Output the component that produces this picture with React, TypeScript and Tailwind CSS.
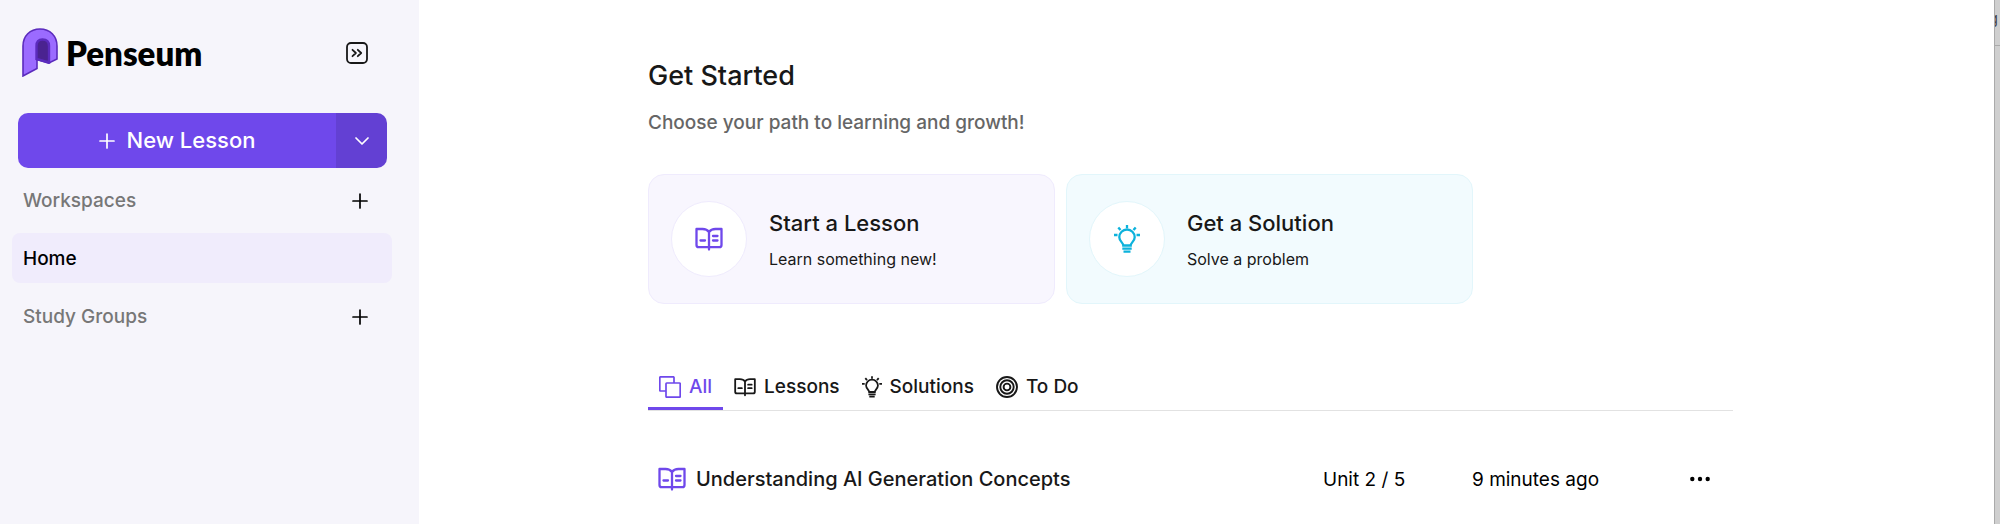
import { useState } from "react";
import type { ReactNode } from "react";

interface IconProps {
  className?: string;
}

interface StartCardProps {
  title: string;
  description: string;
  icon: ReactNode;
  cardClass: string;
  circleClass: string;
}

interface Lesson {
  id: string;
  title: string;
  unit: string;
  updated: string;
}

const lessons: Lesson[] = [
  {
    id: "ai-generation",
    title: "Understanding AI Generation Concepts",
    unit: "Unit 2 / 5",
    updated: "9 minutes ago",
  },
];

const LogoMark = ({ className }: IconProps) => (
  <svg
    viewBox="0 0 36 49"
    stroke="#5b2bbd"
    strokeWidth="1.6"
    className={className}
    aria-hidden="true"
  >
    <path
      d="M1 48V18C1 8 8 1 18 1s17 7 17 17v13l-8.500 4.200L15 31.500V40.500Z"
      fill="#9b6bff"
    />
    <path
      d="M14.500 31V18c0-4 2-6.500 6-6.500s6.500 2.500 6.500 6.500v16.500Z"
      fill="#4a2390"
      strokeWidth="2.400"
    />
  </svg>
);

const BookIcon = ({ className }: IconProps) => (
  <svg
    viewBox="0 0 28 24"
    fill="none"
    stroke="currentColor"
    strokeWidth="2.300"
    strokeLinecap="round"
    strokeLinejoin="round"
    className={className}
    aria-hidden="true"
  >
    <path d="M14 22.500V5c-1.500-2.200-4-3-6.500-3H1.500v16c0 1.500 1 2.200 2.200 2.200h20.600c1.200 0 2.200-.7 2.200-2.200V2h-6c-2.500 0-5 .8-6.500 3" />
    <path d="M5.500 13.500h4.500M18 9h4.500M18 13.500h4.500" />
  </svg>
);

const BulbIcon = ({ className }: IconProps) => (
  <svg
    viewBox="0 0 26 28"
    fill="none"
    stroke="currentColor"
    strokeWidth="2.300"
    className={className}
    aria-hidden="true"
  >
    <path d="M9.300 20.500c0-2.800-4-4.300-4-8.300a7.700 7.700 0 0 1 15.400 0c0 4-4 5.500-4 8.300Z" />
    <path d="M8.300 23.600h9.400M9.500 26.600h7M13 0v3.200M0 10h3.500M22.500 10H26M4.300 2.400l2.200 2.700M21.700 2.400l-2.200 2.700" />
  </svg>
);

const StackIcon = ({ className }: IconProps) => (
  <svg
    viewBox="0 0 22 22"
    fill="none"
    stroke="currentColor"
    strokeWidth="1.700"
    strokeLinejoin="round"
    className={className}
    aria-hidden="true"
  >
    <path d="M7 15H1.500a.7.7 0 0 1-.7-.7V1.500a.7.7 0 0 1 .7-.7h12.800a.7.700 0 0 1 .7.7V7" />
    <rect x="7" y="7" width="14.200" height="14.200" rx=".7" />
  </svg>
);

const TargetIcon = ({ className }: IconProps) => (
  <svg
    viewBox="0 0 22 22"
    fill="none"
    stroke="currentColor"
    strokeWidth="1.900"
    className={className}
    aria-hidden="true"
  >
    <circle cx="11" cy="11" r="10" />
    <circle cx="11" cy="11" r="6.700" />
    <circle cx="11" cy="11" r="3.400" />
  </svg>
);

const PlusIcon = ({ className }: IconProps) => (
  <svg
    viewBox="0 0 16 16"
    stroke="currentColor"
    strokeWidth="1.700"
    strokeLinecap="round"
    className={className}
    aria-hidden="true"
  >
    <path d="M8 1v14M1 8h14" />
  </svg>
);

const StartCard = ({
  title,
  description,
  icon,
  cardClass,
  circleClass,
}: StartCardProps) => (
  <button
    type="button"
    className={`flex flex-1 items-center gap-[22px] rounded-2xl border px-[22px] py-[26px] text-left ${cardClass}`}
  >
    <span
      className={`flex size-[76px] shrink-0 items-center justify-center rounded-full border bg-white ${circleClass}`}
    >
      {icon}
    </span>
    <span className="flex flex-col gap-2">
      <span className="text-[22px] leading-8 font-medium">{title}</span>
      <span className="text-[16px] leading-6">{description}</span>
    </span>
  </button>
);

const tabs = [
  { name: "All", icon: <StackIcon className="size-[22px]" /> },
  { name: "Lessons", icon: <BookIcon className="h-5 w-[22px]" /> },
  { name: "Solutions", icon: <BulbIcon className="h-[22px] w-5" /> },
  { name: "To Do", icon: <TargetIcon className="size-[22px]" /> },
];

const Sidebar = () => (
  <aside className="w-[419px] shrink-0 bg-[#f6f5fb] pt-7">
    <div className="flex items-center justify-between pr-[51px] pl-[22px]">
      <a href="#" className="flex items-center gap-2">
        <LogoMark className="h-[49px] w-9" />
        <span className="font-['Noto_Sans_SemiCondensed','Open_Sans_SemiCondensed','Lato',sans-serif] text-[33px] leading-[46px] font-extrabold text-black">
          Penseum
        </span>
      </a>
      <button type="button" aria-label="Toggle sidebar">
        <svg
          viewBox="0 0 22 22"
          fill="none"
          stroke="currentColor"
          strokeWidth="1.800"
          strokeLinecap="round"
          strokeLinejoin="round"
          className="size-[22px]"
        >
          <rect x="1" y="1" width="20" height="20" rx="4" />
          <path d="m6.500 7.800 3.400 3.200-3.400 3.200M11.800 7.800l3.400 3.200-3.400 3.200" />
        </svg>
      </button>
    </div>

    <div className="mt-9 mr-8 ml-[18px] flex h-[55px] overflow-hidden rounded-[10px] text-white">
      <button
        type="button"
        className="flex flex-1 items-center justify-center gap-3 bg-[#6f48eb] text-[22px] font-medium"
      >
        <PlusIcon className="size-4" />
        New Lesson
      </button>
      <button
        type="button"
        aria-label="More lesson options"
        className="flex w-[51px] items-center justify-center bg-[#6340d3]"
      >
        <svg
          viewBox="0 0 14 8"
          fill="none"
          stroke="currentColor"
          strokeWidth="1.700"
          strokeLinecap="round"
          strokeLinejoin="round"
          className="h-2 w-3.5"
        >
          <path d="m1 1 6 6 6-6" />
        </svg>
      </button>
    </div>

    <nav className="pr-[27px] pl-3 text-[19px] leading-[26px] font-medium">
      <div className="flex h-[65px] items-center justify-between pr-6 pl-[11px] text-[#777]">
        <span>Workspaces</span>
        <button type="button" aria-label="Add workspace">
          <PlusIcon className="size-4 text-black" />
        </button>
      </div>
      <a
        href="#"
        className="flex h-[50px] items-center rounded-lg bg-[#f0ecfc] pt-0.5 pl-[11px] text-black"
      >
        Home
      </a>
      <div className="flex h-[65px] items-center justify-between pt-0.5 pr-6 pl-[11px] text-[#777]">
        <span>Study Groups</span>
        <button type="button" aria-label="Add study group">
          <PlusIcon className="size-4 text-black" />
        </button>
      </div>
    </nav>
  </aside>
);

const App = () => {
  const [activeTab, setActiveTab] = useState("All");

  return (
    <div className="flex min-h-screen bg-white font-['Inter',sans-serif] text-[#181818]">
      <Sidebar />

      <main className="min-w-0 flex-1 pt-14 pr-[261px] pl-[229px]">
        <h1 className="text-[27px] leading-10 font-medium">Get Started</h1>
        <p className="mt-[13px] text-[19px] leading-7 font-medium text-[#666]">
          Choose your path to learning and growth!
        </p>

        <div className="mt-[37px] mr-[260px] flex gap-[11px]">
          <StartCard
            title="Start a Lesson"
            description="Learn something new!"
            icon={<BookIcon className="h-6 w-7 text-[#6f48eb]" />}
            cardClass="border-[#efebfd] bg-[#f8f6fe]"
            circleClass="border-[#efebfd]"
          />
          <StartCard
            title="Get a Solution"
            description="Solve a problem"
            icon={<BulbIcon className="h-7 w-[26px] text-[#0cb2dc]" />}
            cardClass="border-[#e2f6fb] bg-[#f2fbfe]"
            circleClass="border-[#e2f6fb]"
          />
        </div>

        <div role="tablist" className="mt-[62px] flex border-b border-[#e2e2e2]">
          {tabs.map((tab) => (
            <button
              key={tab.name}
              type="button"
              role="tab"
              aria-selected={activeTab === tab.name}
              onClick={() => setActiveTab(tab.name)}
              className={`flex h-11 items-center gap-2 border-b-3 px-[11px] text-[19px] font-medium ${
                activeTab === tab.name
                  ? "border-[#6f48eb] text-[#6f48eb]"
                  : "border-transparent"
              }`}
            >
              {tab.icon}
              <span className="pt-0.5">{tab.name}</span>
            </button>
          ))}
        </div>

        <table className="mt-10 w-full text-left">
          <tbody>
            {lessons.map((lesson) => (
              <tr key={lesson.id} className="h-14 text-[19px] text-black">
                <th
                  scope="row"
                  className="pl-[10px] text-[20px] font-medium text-[#181818]"
                >
                  <a href="#" className="flex items-center gap-[10px]">
                    <BookIcon className="h-6 w-7 text-[#6f48eb]" />
                    {lesson.title}
                  </a>
                </th>
                <td className="w-[149px] pt-0.5">{lesson.unit}</td>
                <td className="w-[218px] pt-0.5">{lesson.updated}</td>
                <td className="w-[43px]">
                  <button
                    type="button"
                    aria-label="Lesson options"
                    className="flex items-center"
                  >
                    <svg
                      viewBox="0 0 20 6"
                      fill="currentColor"
                      className="h-1.5 w-5"
                    >
                      <circle cx="2.300" cy="3" r="2.200" />
                      <circle cx="10" cy="3" r="2.200" />
                      <circle cx="17.700" cy="3" r="2.200" />
                    </svg>
                  </button>
                </td>
              </tr>
            ))}
          </tbody>
        </table>
      </main>

      {/* Edge of the neighbouring panel */}
      <aside className="flex w-1.5 shrink-0 flex-col overflow-hidden border-l border-[#aaa] bg-[#cfcfcf]">
        <div className="flex h-[46px] justify-end border-b border-[#aaa] pt-2 pr-0.5 text-[15px] text-[#444]">
          g
        </div>
      </aside>
    </div>
  );
};

export default App;
